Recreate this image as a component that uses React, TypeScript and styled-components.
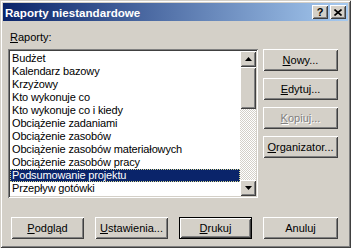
import React from 'react';
import styled, { createGlobalStyle } from 'styled-components';

const GlobalStyle = createGlobalStyle`
  html, body {
    margin: 0;
    padding: 0;
    background: #d4d0c8;
  }
  body {
    font-family: "Liberation Sans", Arial, sans-serif;
    font-size: 11px;
    color: #000;
  }
`;

const raised = `
  box-shadow: inset 1px 1px #ffffff, inset -1px -1px #404040,
    inset 2px 2px #d4d0c8, inset -2px -2px #808080;
`;

const Window = styled.div`
  box-sizing: border-box;
  width: 351px;
  height: 248px;
  padding: 3px;
  background: #d4d0c8;
  box-shadow: inset 1px 1px #d4d0c8, inset -1px -1px #404040,
    inset 2px 2px #ffffff, inset -2px -2px #808080;
  display: flex;
  flex-direction: column;
`;

const TitleBar = styled.div`
  height: 18px;
  display: flex;
  align-items: center;
  padding: 0 2px;
  background: linear-gradient(90deg, #0a246a 0%, #a6caf0 100%);
  color: #fff;
`;

const TitleText = styled.div`
  font-weight: bold;
  font-size: 11.6px;
  white-space: nowrap;
`;

const TitleButtons = styled.div`
  margin-left: auto;
  display: flex;
  gap: 2px;
`;

const CaptionButton = styled.div`
  box-sizing: border-box;
  width: 16px;
  height: 14px;
  background: #d4d0c8;
  ${raised}
  display: flex;
  align-items: center;
  justify-content: center;
  color: #000;
  font-weight: bold;
  font-size: 11px;
  line-height: 14px;
`;

const Body = styled.div`
  display: flex;
  flex-direction: column;
  padding: 10px 0 0 5px;
`;

const Label = styled.div`
  line-height: 13px;
  margin-left: 2px;
`;

const Key = styled.span`
  text-decoration: underline;
  text-underline-offset: 1px;
`;

const Main = styled.div`
  display: grid;
  grid-template-columns: 250px 75px;
  column-gap: 5px;
  margin-top: 5px;
`;

const ListBox = styled.div`
  box-sizing: border-box;
  height: 149px;
  padding: 2px;
  background: #fff;
  box-shadow: inset 1px 1px #808080, inset -1px -1px #ffffff,
    inset 2px 2px #404040, inset -2px -2px #d4d0c8;
  display: flex;
`;

const Items = styled.div`
  flex: 1;
  overflow: hidden;
  padding-top: 1px;
`;

const Item = styled.div<{ $selected?: boolean }>`
  box-sizing: border-box;
  height: 13px;
  line-height: 13px;
  padding-left: 2px;
  letter-spacing: -0.15px;
  white-space: nowrap;
  background: ${p => (p.$selected ? '#0a246a' : 'transparent')};
  color: ${p => (p.$selected ? '#fff' : '#000')};
  outline: ${p => (p.$selected ? '1px dotted #d8d890' : 'none')};
  outline-offset: -1px;
`;

const ScrollBar = styled.div`
  width: 16px;
  display: flex;
  flex-direction: column;
`;

const ScrollButton = styled.div`
  box-sizing: border-box;
  height: 16px;
  background: #d4d0c8;
  ${raised}
  display: flex;
  align-items: center;
  justify-content: center;
`;

const Thumb = styled.div`
  box-sizing: border-box;
  height: 42px;
  background: #d4d0c8;
  ${raised}
`;

const Track = styled.div`
  flex: 1;
  background: repeating-conic-gradient(#d4d0c8 0 25%, #ffffff 0 50%) 0 0 / 2px 2px;
`;

const SideButtons = styled.div`
  display: flex;
  flex-direction: column;
  gap: 7px;
`;

const Button = styled.div<{ $width?: number; $default?: boolean; $disabled?: boolean }>`
  box-sizing: border-box;
  width: ${p => p.$width ?? 75}px;
  height: 22px;
  background: #d4d0c8;
  display: flex;
  align-items: center;
  justify-content: center;
  white-space: nowrap;
  line-height: 13px;
  color: ${p => (p.$disabled ? '#808080' : '#000')};
  text-shadow: ${p => (p.$disabled ? '1px 1px #ffffff' : 'none')};
  box-shadow: ${p =>
    p.$default
      ? 'inset 0 0 0 1px #000, inset 2px 2px #fff, inset -2px -2px #404040, inset 3px 3px #d4d0c8, inset -3px -3px #808080'
      : 'inset 1px 1px #ffffff, inset -1px -1px #404040, inset 2px 2px #d4d0c8, inset -2px -2px #808080'};
`;

const BottomRow = styled.div`
  display: flex;
  gap: 11px;
  margin: 19px 0 0 3px;
`;

const Arrow: React.FC<{ down?: boolean }> = ({ down }) => (
  <svg width="7" height="4" viewBox="0 0 7 4">
    <path d={down ? 'M0 0h7L3.5 4z' : 'M0 4h7L3.5 0z'} fill="#000" />
  </svg>
);

const reports = [
  'Budżet',
  'Kalendarz bazowy',
  'Krzyżowy',
  'Kto wykonuje co',
  'Kto wykonuje co i kiedy',
  'Obciążenie zadaniami',
  'Obciążenie zasobów',
  'Obciążenie zasobów materiałowych',
  'Obciążenie zasobów pracy',
  'Podsumowanie projektu',
  'Przepływ gotówki',
];

const App: React.FC = () => {
  const selected = 'Podsumowanie projektu';

  return (
    <>
      <GlobalStyle />
      <Window>
        <TitleBar>
          <TitleText>Raporty niestandardowe</TitleText>
          <TitleButtons>
            <CaptionButton>?</CaptionButton>
            <CaptionButton>
              <svg width="8" height="7" viewBox="0 0 8 7">
                <path d="M0.5 0.5L7.5 6.5M7.5 0.5L0.5 6.5" stroke="#000" strokeWidth="1.6" />
              </svg>
            </CaptionButton>
          </TitleButtons>
        </TitleBar>

        <Body>
          <Label>
            <Key>R</Key>aporty:
          </Label>

          <Main>
            <ListBox>
              <Items>
                {reports.map(r => (
                  <Item key={r} $selected={r === selected}>
                    {r}
                  </Item>
                ))}
              </Items>
              <ScrollBar>
                <ScrollButton>
                  <Arrow />
                </ScrollButton>
                <Thumb />
                <Track />
                <ScrollButton>
                  <Arrow down />
                </ScrollButton>
              </ScrollBar>
            </ListBox>

            <SideButtons>
              <Button>
                <Key>N</Key>owy...
              </Button>
              <Button>
                <Key>E</Key>dytuj...
              </Button>
              <Button $disabled>
                <Key>K</Key>opiuj...
              </Button>
              <Button>
                <Key>O</Key>rganizator...
              </Button>
            </SideButtons>
          </Main>

          <BottomRow>
            <Button $width={73}>
              <Key>P</Key>odgląd
            </Button>
            <Button $width={73}>
              <Key>U</Key>stawienia...
            </Button>
            <Button $width={73} $default>
              <Key>D</Key>rukuj
            </Button>
            <Button $width={75}>Anuluj</Button>
          </BottomRow>
        </Body>
      </Window>
    </>
  );
};

export default App;
